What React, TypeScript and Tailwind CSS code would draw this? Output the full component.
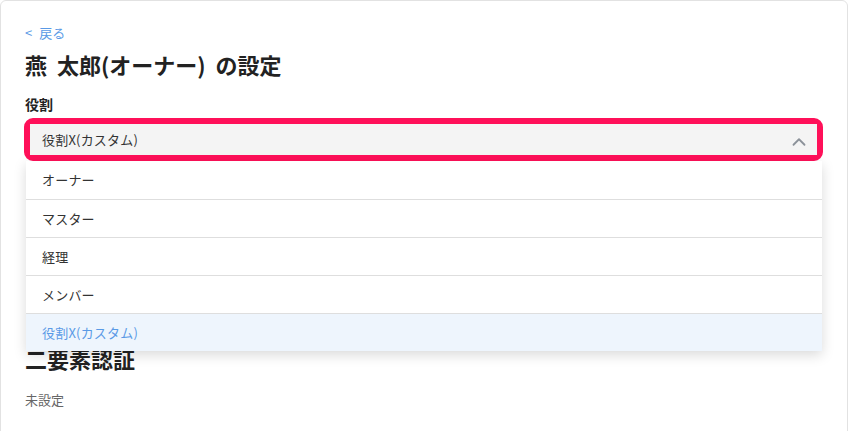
import { ChevronUp } from 'lucide-react';

const roles = ['オーナー', 'マスター', '経理', 'メンバー', '役割X(カスタム)'];

export default function App() {
  const selected = '役割X(カスタム)';

  return (
    <div
      className="h-[431px] w-[848px] overflow-hidden bg-white text-[#333]"
      style={{ fontFamily: '"Noto Sans CJK JP", "Noto Sans", sans-serif' }}
    >
      <div className="h-[460px] rounded-md border border-[#e2e2e2] px-6 pt-[23px]">
        <a className="flex text-[13px] leading-[18px] text-[#5a9ae6]">
          <span>&lt;</span>
          <span className="ml-[7px]">戻る</span>
        </a>
        <h1 className="mt-[7px] text-[22px] font-bold leading-[30px] text-[#222] [word-spacing:5px]">
          燕 太郎(オーナー) の設定
        </h1>

        <div className="mt-[15px] text-[14px] font-bold leading-[20px] text-[#222]">役割</div>

        {/* select, highlighted */}
        <div className="relative mt-[4px] -ml-px">
          <div className="rounded-[9px] border-[6px] border-[#ff1059]">
            <div className="flex h-[31px] items-center justify-between bg-[#f4f4f4] pl-[12px] pr-[7px]">
              <span className="text-[13px] tracking-[0.2px] text-[#333]">{selected}</span>
              <ChevronUp size={22} strokeWidth={2} className="mt-[4px] text-[#8c929a]" />
            </div>
          </div>

          {/* options */}
          <ul className="absolute left-[2px] right-px top-full z-10 bg-white shadow-[0_4px_12px_rgba(0,0,0,0.15)]">
            {roles.map((r, i) => (
              <li
                key={r}
                className={`flex h-[38px] items-center px-4 text-[13px] tracking-[0.2px] ${
                  i > 0 ? 'border-t border-[#dedede]' : ''
                } ${r === selected ? 'bg-[#eef5fd] text-[#5a9ae6]' : 'text-[#333]'}`}
              >
                {r}
              </li>
            ))}
          </ul>
        </div>

        <h2 className="mt-[182px] text-[22px] font-bold leading-[30px] text-[#222]">二要素認証</h2>
        <p className="mt-[18px] text-[13px] leading-[18px] text-[#666]">未設定</p>
      </div>
    </div>
  );
}
